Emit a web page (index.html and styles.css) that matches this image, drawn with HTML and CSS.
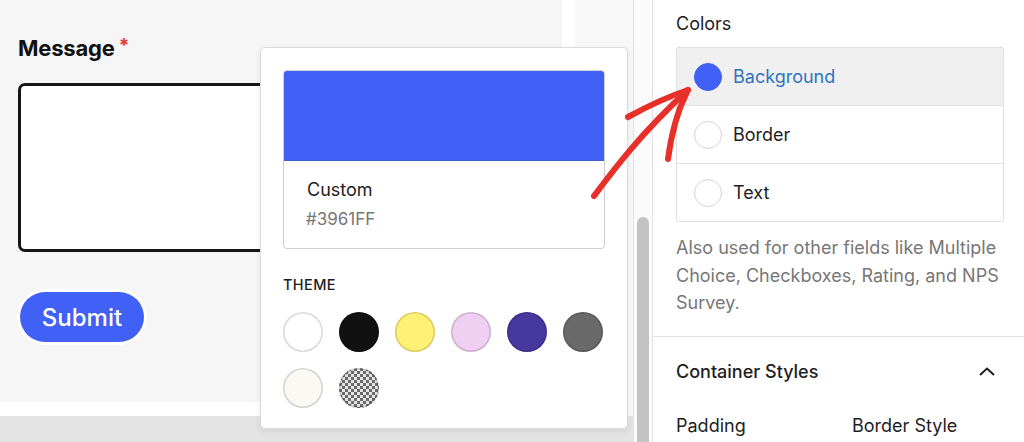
FILE: index.html
```html
<!DOCTYPE html>
<html>
<head>
<meta charset="utf-8">
<link rel="stylesheet" href="styles.css">
</head>
<body>
<div class="canvas">
  <div class="preview-row">
    <div class="preview">
      <div class="card">
        <div class="label">Message<span class="req">*</span></div>
        <div class="textarea"></div>
        <div class="submit">Submit</div>
      </div>
    </div>
  </div>
  <div class="canvas-bottom"></div>
</div>
<div class="scrolltrack"><div class="thumb"></div></div>
<div class="sidebar">
  <div class="sec-title">Colors</div>
  <div class="color-list">
    <div class="color-row active"><span class="dot filled"></span><span class="row-label">Background</span></div>
    <div class="color-row"><span class="dot"></span><span class="row-label">Border</span></div>
    <div class="color-row"><span class="dot"></span><span class="row-label">Text</span></div>
  </div>
  <p class="help">Also used for other fields like Multiple Choice, Checkboxes, Rating, and NPS Survey.</p>
  <div class="divider"></div>
  <div class="panel-head"><span>Container Styles</span>
    <svg class="chev" width="18" height="12" viewBox="0 0 18 12"><path d="M2 9 L9 2.5 L16 9" fill="none" stroke="#1e1e1e" stroke-width="2"/></svg>
  </div>
  <div class="fields"><span class="f1">Padding</span><span class="f2">Border Style</span></div>
</div>

<div class="popover">
  <div class="current">
    <div class="swatch-big"></div>
    <div class="current-info">
      <div class="cname">Custom</div>
      <div class="chex">#3961FF</div>
    </div>
  </div>
  <div class="theme-label">THEME</div>
  <div class="swatches">
    <span class="sw s-white"></span>
    <span class="sw s-black"></span>
    <span class="sw s-yellow"></span>
    <span class="sw s-pink"></span>
    <span class="sw s-purple"></span>
    <span class="sw s-gray"></span>
    <span class="sw s-offwhite"></span>
    <span class="sw s-transparent"></span>
  </div>
</div>

<svg class="arrow" width="1024" height="442" viewBox="0 0 1024 442">
  <path d="M594 196 C612 172 640 134 688 90" fill="none" stroke="#e8302a" stroke-width="6" stroke-linecap="round"/>
  <path d="M628 117 C648 106 667 97 688 90" fill="none" stroke="#e8302a" stroke-width="6" stroke-linecap="round"/>
  <path d="M668 159 C671 136 677 112 687 92" fill="none" stroke="#e8302a" stroke-width="6" stroke-linecap="round"/>
</svg>
</body>
</html>
```

FILE: styles.css
```css
* { box-sizing: border-box; }
html, body { margin: 0; padding: 0; }
body {
  width: 1024px;
  height: 442px;
  overflow: hidden;
  display: flex;
  position: relative;
  font-family: Inter, "Noto Sans", sans-serif;
  color: #1e1e1e;
  background: #fff;
}
.canvas {
  width: 633px;
  display: flex;
  flex-direction: column;
  background: #f8f8f8;
}
.preview-row { height: 416px; }
.preview {
  width: 575px;
  height: 416px;
  background: #fff;
}
.card {
  width: 562px;
  height: 402px;
  background: #f6f6f6;
  padding: 34px 0 0 18px;
}
.canvas-bottom { flex: 1; background: #e3e3e3; }
.label {
  font-size: 22px;
  font-weight: 700;
  color: #111;
  letter-spacing: -0.2px;
  line-height: 28px;
  height: 28px;
}
.req { color: #e33b2e; font-size: 19px; margin-left: 4px; vertical-align: 4px; line-height: 0; }
.textarea {
  margin-top: 21px;
  width: 560px;
  height: 169px;
  border: 3px solid #161616;
  border-radius: 7px;
  background: #fff;
}
.submit {
  margin: 40px 0 0 2px;
  width: 124px;
  height: 50px;
  border-radius: 25px;
  background: #4060f6;
  box-shadow: 0 0 0 3px #fff;
  color: #fff;
  font-size: 24px;
  font-weight: 500;
  display: flex;
  align-items: center;
  justify-content: center;
}
.scrolltrack {
  width: 20px;
  background: #fbfbfb;
  border-left: 1px solid #e2e2e2;
  border-right: 1px solid #e2e2e2;
  padding: 217px 0 0 3px;
}
.thumb {
  width: 12px;
  height: 240px;
  border-radius: 6px;
  background: #c3c3c3;
}
.sidebar {
  flex: 1;
  background: #fff;
  padding: 12px 20px 0 23px;
  overflow: hidden;
}
.sec-title { font-size: 18px; line-height: 24px; color: #1e1e1e; }
.color-list {
  margin-top: 11px;
  border: 1px solid #e0e0e0;
  border-radius: 2px;
}
.color-row {
  height: 58px;
  display: flex;
  align-items: center;
  padding-left: 17px;
  gap: 11px;
  font-size: 18px;
  border-top: 1px solid #e0e0e0;
}
.color-row:first-child { border-top: none; height: 57px; }
.color-row.active { background: #f0f0f0; }
.color-row.active .row-label { color: #2f73c0; }
.dot {
  width: 28px;
  height: 28px;
  border-radius: 50%;
  border: 1px solid #d4d4d4;
  background: #fff;
}
.dot.filled { background: #4060f6; border-color: #3f5ef0; }
.help {
  margin: 12px 0 0;
  font-size: 18px;
  line-height: 27.5px;
  color: #777;
  width: 330px;
}
.divider {
  margin: 19px -20px 0 -23px;
  border-top: 1px solid #e4e4e4;
}
.panel-head {
  margin-top: 23px;
  display: flex;
  justify-content: space-between;
  align-items: center;
  font-size: 18px;
  line-height: 24px;
  font-weight: 500;
  padding-right: 8px;
}
.fields {
  margin-top: 30px;
  font-size: 18px;
  line-height: 24px;
  display: flex;
}
.f1 { width: 176px; }
.popover {
  position: absolute;
  left: 260px;
  top: 47px;
  width: 368px;
  height: 382px;
  background: #fff;
  border: 1px solid #dcdcdc;
  border-radius: 5px;
  box-shadow: 0 2px 6px rgba(0,0,0,0.08);
  padding: 22px 22px 0;
}
.current {
  width: 322px;
  border: 1px solid #cfcfcf;
  border-radius: 4px;
  overflow: hidden;
}
.swatch-big { height: 90px; background: #4060f6; border-bottom: 1px solid #3a63c4; }
.current-info { padding: 17px 0 0 23px; height: 87px; }
.cname { font-size: 18px; line-height: 24px; color: #1e1e1e; }
.chex { font-size: 17px; line-height: 24px; color: #777; margin-top: 5px; margin-left: -1px; }
.theme-label {
  margin-top: 26px;
  font-size: 14.5px;
  font-weight: 500;
  letter-spacing: 0.4px;
  color: #1e1e1e;
  line-height: 20px;
}
.swatches {
  margin-top: 17px;
  display: grid;
  grid-template-columns: repeat(6, 40px);
  gap: 16px;
}
.sw {
  width: 40px;
  height: 40px;
  border-radius: 50%;
  box-shadow: inset 0 0 0 1.5px rgba(0,0,0,0.15);
}
.s-white { background: #fff; }
.s-black { background: #111; }
.s-yellow { background: #fff176; }
.s-pink { background: #f0d0f2; }
.s-purple { background: #46389f; }
.s-gray { background: #6a6a6a; }
.s-offwhite { background: #faf9f4; }
.s-transparent { background: repeating-conic-gradient(#6a6a6a 0 25%, #e4e4e4 0 50%) 0 0 / 6px 6px; }
.arrow { position: absolute; left: 0; top: 0; pointer-events: none; }
```
